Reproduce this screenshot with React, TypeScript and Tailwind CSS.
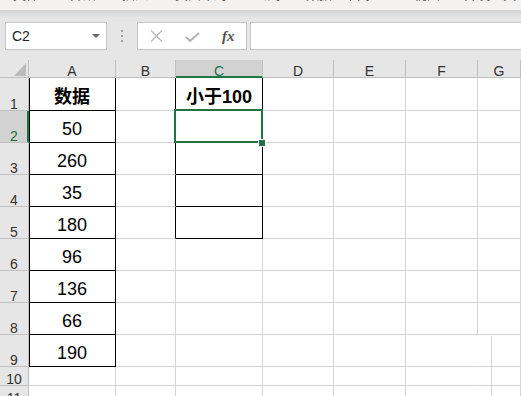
import React from 'react';

const COLS = ['A', 'B', 'C', 'D', 'E', 'F', 'G'];
const ROWS = [1, 2, 3, 4, 5, 6, 7, 8, 9, 10, 11];
const A_DATA: Record<number, string> = { 2: '50', 3: '260', 4: '35', 5: '180', 6: '96', 7: '136', 8: '66', 9: '190' };

function cellBorder(r: number, c: number) {
  let right = 'border-r-[#d4d4d4]';
  let bottom = 'border-b-[#d4d4d4]';
  let extra = '';
  if (c === 0 && r <= 9) {
    right = 'border-r-black';
    bottom = 'border-b-black';
    extra = 'shadow-[inset_1px_0_0_#000]';
  }
  if (c === 1 && r <= 5) right = 'border-r-black';
  if (c === 2 && r <= 5) {
    right = 'border-r-black';
    bottom = 'border-b-black';
  }
  if (c === 5 && r >= 9) right = 'border-r-white';
  return `border-r border-b ${right} ${bottom} ${extra}`;
}

function Tabs() {
  const tabs: [string, string][] = [
    ['文件', 'ml-[13px]'],
    ['开始', 'ml-[31px]'],
    ['插入', 'ml-[26px]'],
    ['页面布局', 'ml-[27px]'],
    ['公式', 'ml-[27px]'],
    ['数据', 'ml-[26px]'],
    ['审阅', 'ml-[12px]'],
    ['视图', 'ml-[44px]'],
    ['开发工具', 'ml-[24px]'],
  ];
  return (
    <div className="h-[10px] overflow-hidden bg-[#f3f2f1]">
      <div className="flex whitespace-nowrap -mt-[13px] text-[13px] leading-[13px] text-[#555] font-['Noto_Sans_CJK_SC',sans-serif]">
        {tabs.map(([t, m]) => (
          <span key={t} className={m}>{t}</span>
        ))}
      </div>
    </div>
  );
}

function FormulaBar() {
  return (
    <div className="h-[42px] bg-[#e6e6e6] flex items-start pt-[4px] font-['Liberation_Sans',sans-serif]">
      <div className="ml-[5px] w-[102px] h-[28px] bg-white border border-[#c6c6c6] flex items-center justify-between pl-[6px] pr-[6px]">
        <span className="text-[14px] text-[#222] leading-none">C2</span>
        <svg width="8" height="5" viewBox="0 0 8 5"><path d="M0 0H8L4 4Z" fill="#666" /></svg>
      </div>
      <div className="w-[30px] h-[28px] flex flex-col items-center justify-center gap-[3px]">
        <span className="w-[2px] h-[2px] bg-[#a0a0a0]" />
        <span className="w-[2px] h-[2px] bg-[#a0a0a0]" />
        <span className="w-[2px] h-[2px] bg-[#a0a0a0]" />
      </div>
      <div className="w-[110px] h-[28px] bg-white border border-[#c6c6c6] flex items-center">
        <svg className="ml-[12px]" width="13" height="12" viewBox="0 0 13 12">
          <path d="M1 0.5L12 11.5M12 0.5L1 11.5" stroke="#b4b4b4" strokeWidth="1.2" fill="none" />
        </svg>
        <svg className="ml-[22px] mt-[2px]" width="15" height="10" viewBox="0 0 15 10">
          <path d="M1 5L5 9L14 1" stroke="#b4b4b4" strokeWidth="2" fill="none" />
        </svg>
        <span className="ml-[22px] text-[15px] italic font-bold leading-none text-[#555] font-['Liberation_Serif',serif]">fx</span>
      </div>
      <div className="ml-[3px] flex-1 h-[28px] bg-white border border-[#c6c6c6] border-r-0" />
    </div>
  );
}

function Grid() {
  return (
    <div className="relative grid grid-cols-[29px_87px_60px_87px_71px_72px_72px_1fr] grid-rows-[18px_33px_32px_32px_32px_32px_32px_32px_32px_32px_19px_19px] bg-white font-['Liberation_Sans','Noto_Sans_CJK_SC',sans-serif]">
      {/* corner */}
      <div className="bg-[#e6e6e6] border-r border-b border-[#bfbfbf] flex items-end justify-end pr-[2px] pb-[1px]">
        <svg width="12" height="13" viewBox="0 0 12 13"><path d="M12 0V13H0Z" fill="#bcbcbc" /></svg>
      </div>
      {COLS.map((c) => (
        <div
          key={c}
          className={
            c === 'C'
              ? 'bg-[#d2d2d2] border-r border-b border-r-[#bfbfbf] border-b-[#217346] shadow-[inset_0_-1px_0_#217346] flex items-end justify-center text-[14px] leading-[12px] text-[#217346]'
              : 'bg-[#e6e6e6] border-r border-b border-r-[#bfbfbf] border-b-[#bfbfbf] flex items-end justify-center text-[14px] leading-[12px] text-[#333]'
          }
        >
          {c}
        </div>
      ))}
      {ROWS.map((r) => (
        <React.Fragment key={r}>
          <div
            className={
              r === 2
                ? 'bg-[#d2d2d2] border-r border-b border-r-[#217346] border-b-[#bfbfbf] shadow-[inset_-1px_0_0_#217346] flex items-end justify-center text-[14px] leading-[12px] text-[#217346]'
                : 'bg-[#e6e6e6] border-r border-b border-r-[#bfbfbf] border-b-[#bfbfbf] flex items-end justify-center text-[14px] leading-[12px] text-[#333]'
            }
          >
            {r}
          </div>
          {COLS.map((c, ci) => {
            let content: React.ReactNode = null;
            if (ci === 0 && r === 1) content = <span className="font-bold">数据</span>;
            else if (ci === 0 && A_DATA[r]) content = A_DATA[r];
            else if (ci === 2 && r === 1) content = <span className="font-bold">小于100</span>;
            return (
              <div
                key={c}
                className={`${cellBorder(r, ci)} relative flex items-end justify-center text-[18px] leading-[20px] pb-[3px] text-black`}
              >
                {content}
                {ci === 2 && r === 2 && (
                  <>
                    <div className="absolute z-10 left-[-2px] top-[-2px] w-[89px] h-[34px] border-2 border-[#217346]" />
                    <div className="absolute z-20 left-[82px] top-[28px] w-[8px] h-[8px] bg-[#217346] border border-white" />
                  </>
                )}
              </div>
            );
          })}
        </React.Fragment>
      ))}
      <div className="absolute left-[491px] top-[276px] w-px h-[80px] bg-[#d4d4d4]" />
    </div>
  );
}

export default function App() {
  return (
    <div className="w-[521px] h-[396px] overflow-hidden bg-white">
      <Tabs />
      <div className="h-[8px] bg-gradient-to-b from-[#d3d3d3] to-[#e6e6e6]" />
      <FormulaBar />
      <Grid />
    </div>
  );
}
